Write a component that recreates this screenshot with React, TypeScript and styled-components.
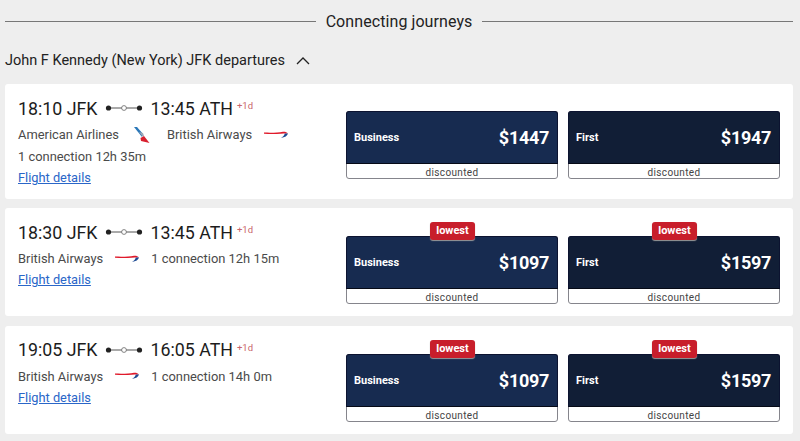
import React from "react";
import styled, { createGlobalStyle } from "styled-components";

const Global = createGlobalStyle`
  html, body { margin: 0; padding: 0; background: #eeeeee; }
  body { font-family: Roboto, "Liberation Sans", sans-serif; overflow: hidden; }
`;

const Page = styled.div`
  width: 800px;
  height: 441px;
  padding: 0 7px 0 5px;
  box-sizing: border-box;
  overflow: hidden;
`;

const Heading = styled.div`
  display: flex;
  align-items: center;
  gap: 10px;
  height: 42px;
  font-size: 16px;
  letter-spacing: 0.08px;
  color: #222;
`;

const Rule = styled.div`
  flex: 1;
  height: 1px;
  background: #777;
`;

const SectionTitle = styled.div`
  display: flex;
  align-items: center;
  gap: 11px;
  height: 36px;
  margin-bottom: 6px;
  font-size: 14.5px;
  color: #222;
`;

const CardList = styled.div`
  display: flex;
  flex-direction: column;
  gap: 9.25px;
`;

const Card = styled.div<{ $height: number }>`
  display: flex;
  height: ${(p) => p.$height}px;
  box-sizing: border-box;
  padding: 0 12px 0 13px;
  background: #fff;
  border-radius: 3px;
`;

const Info = styled.div`
  width: 328px;
  padding-top: 12px;
`;

const TimeRow = styled.div`
  display: flex;
  align-items: center;
  height: 24px;
  font-size: 17.8px;
  color: #1c1c1c;
  white-space: nowrap;
`;

const Stops = styled.svg`
  width: 38px;
  height: 8px;
  margin: 0 8px 0 7px;
`;

const DayOffset = styled.sup`
  align-self: flex-start;
  margin: 1px 0 0 4px;
  font-size: 9.5px;
  line-height: 18px;
  color: #c9666c;
`;

const MetaRow = styled.div`
  display: flex;
  align-items: center;
  margin-top: 3px;
  height: 23px;
  font-size: 12.9px;
  color: #4a4a4a;
  white-space: nowrap;
`;

const BritishMark = styled.svg`
  margin: 0 12px;
`;

const AmericanMark = styled.svg`
  margin: 0 17px 0 15px;
`;

const Line = styled.div`
  height: 22px;
  line-height: 22px;
  font-size: 12.9px;
  color: #4a4a4a;
`;

const DetailsLink = styled.a`
  display: block;
  height: 20px;
  line-height: 20px;
  font-size: 12.8px;
  color: #2a66c8;
  text-decoration: underline;
`;

const Fares = styled.div<{ $top: number }>`
  display: flex;
  gap: 10px;
  padding-top: ${(p) => p.$top}px;
`;

const Fare = styled.div`
  position: relative;
  width: 212px;
  height: 68px;
  box-sizing: border-box;
  border: 1px solid #85858c;
  border-radius: 3px;
  background: #fff;
`;

const FareMain = styled.div<{ $bg: string }>`
  display: flex;
  justify-content: space-between;
  align-items: center;
  height: 53px;
  margin: -1px -1px 0;
  padding: 0 8px 0 7px;
  box-sizing: border-box;
  background: ${(p) => p.$bg};
  border: 1px solid #0c1330;
  border-bottom-color: #060a16;
  border-radius: 3px 3px 0 0;
  color: #fff;
`;

const Cabin = styled.span`
  font-size: 11px;
  font-weight: 700;
`;

const Price = styled.span`
  font-size: 18px;
  font-weight: 700;
  letter-spacing: -0.3px;
`;

const Note = styled.div`
  height: 14px;
  line-height: 17px;
  text-align: center;
  font-size: 10px;
  letter-spacing: 0.35px;
  color: #444;
`;

const Badge = styled.div`
  position: absolute;
  top: -15px;
  left: 83px;
  width: 45px;
  height: 18px;
  line-height: 17px;
  box-sizing: border-box;
  text-align: center;
  font-size: 11px;
  font-weight: 700;
  color: #fff;
  background: #c81e2b;
  border-radius: 3px;
  box-shadow: 0 1px 1px #999;
`;

const Chevron = () => (
  <svg width="14" height="9" viewBox="0 0 14 9" fill="none">
    <path d="M1 8 L7 2 L13 8" stroke="#222" strokeWidth="1.3" />
  </svg>
);

const StopsIcon = () => (
  <Stops viewBox="0 0 38 8">
    <line x1="3" y1="4" x2="35" y2="4" stroke="#555" strokeWidth="1" />
    <circle cx="3.5" cy="4" r="2.6" fill="#222" />
    <circle cx="19" cy="4" r="2.4" fill="#fff" stroke="#666" strokeWidth="0.8" />
    <circle cx="34.5" cy="4" r="2.6" fill="#222" />
  </Stops>
);

const BritishLogo = () => (
  <BritishMark width="24" height="8" viewBox="0 0 24 8">
    <path d="M0 1.6 C8 2 14 1.6 19 0.8 C21 0.6 23 1.2 23.8 2.6 C21 2 14 3.6 0 2.8Z" fill="#e01a2b" />
    <path d="M24 2.6 C23.4 5 21 6.4 17 7 C19 5.8 20.4 4.4 20.8 2.6Z" fill="#1d4b94" />
  </BritishMark>
);

const AmericanLogo = () => (
  <AmericanMark width="16" height="17" viewBox="0 0 16 17">
    <path d="M0 1 L3 1 L9 8 L8 11Z" fill="#2a77b8" />
    <path d="M5 6 L9 7 L10 10 L8.5 10.5Z" fill="#9aa7b5" />
    <path d="M6.5 12 L10 10 L15.5 17 L7 15Z" fill="#d8202f" />
  </AmericanMark>
);

type Flight = {
  dep: string;
  arr: string;
  price: [string, string];
  lowest: boolean;
  height: number;
  top: number;
  meta: React.ReactNode;
};

const flights: Flight[] = [
  {
    dep: "18:10 JFK",
    arr: "13:45 ATH",
    price: ["$1447", "$1947"],
    lowest: false,
    height: 115,
    top: 27,
    meta: (
      <>
        <MetaRow>
          American Airlines
          <AmericanLogo />
          British Airways
          <BritishLogo />
        </MetaRow>
        <Line>1 connection 12h 35m</Line>
      </>
    ),
  },
  {
    dep: "18:30 JFK",
    arr: "13:45 ATH",
    price: ["$1097", "$1597"],
    lowest: true,
    height: 108,
    top: 28,
    meta: (
      <MetaRow>
        British Airways
        <BritishLogo />
        1 connection 12h 15m
      </MetaRow>
    ),
  },
  {
    dep: "19:05 JFK",
    arr: "16:05 ATH",
    price: ["$1097", "$1597"],
    lowest: true,
    height: 108,
    top: 28,
    meta: (
      <MetaRow>
        British Airways
        <BritishLogo />
        1 connection 14h 0m
      </MetaRow>
    ),
  },
];

const cabins = [
  { name: "Business", bg: "#172b50" },
  { name: "First", bg: "#111e36" },
];

export default function App() {
  return (
    <Page>
      <Global />
      <Heading>
        <Rule />
        Connecting journeys
        <Rule />
      </Heading>
      <SectionTitle>
        John F Kennedy (New York) JFK departures
        <Chevron />
      </SectionTitle>
      <CardList>
        {flights.map((f) => (
          <Card key={f.dep} $height={f.height}>
            <Info>
              <TimeRow>
                {f.dep}
                <StopsIcon />
                {f.arr}
                <DayOffset>+1d</DayOffset>
              </TimeRow>
              {f.meta}
              <DetailsLink href="#">Flight details</DetailsLink>
            </Info>
            <Fares $top={f.top}>
              {cabins.map((c, i) => (
                <Fare key={c.name}>
                  {f.lowest && <Badge>lowest</Badge>}
                  <FareMain $bg={c.bg}>
                    <Cabin>{c.name}</Cabin>
                    <Price>{f.price[i]}</Price>
                  </FareMain>
                  <Note>discounted</Note>
                </Fare>
              ))}
            </Fares>
          </Card>
        ))}
      </CardList>
    </Page>
  );
}
